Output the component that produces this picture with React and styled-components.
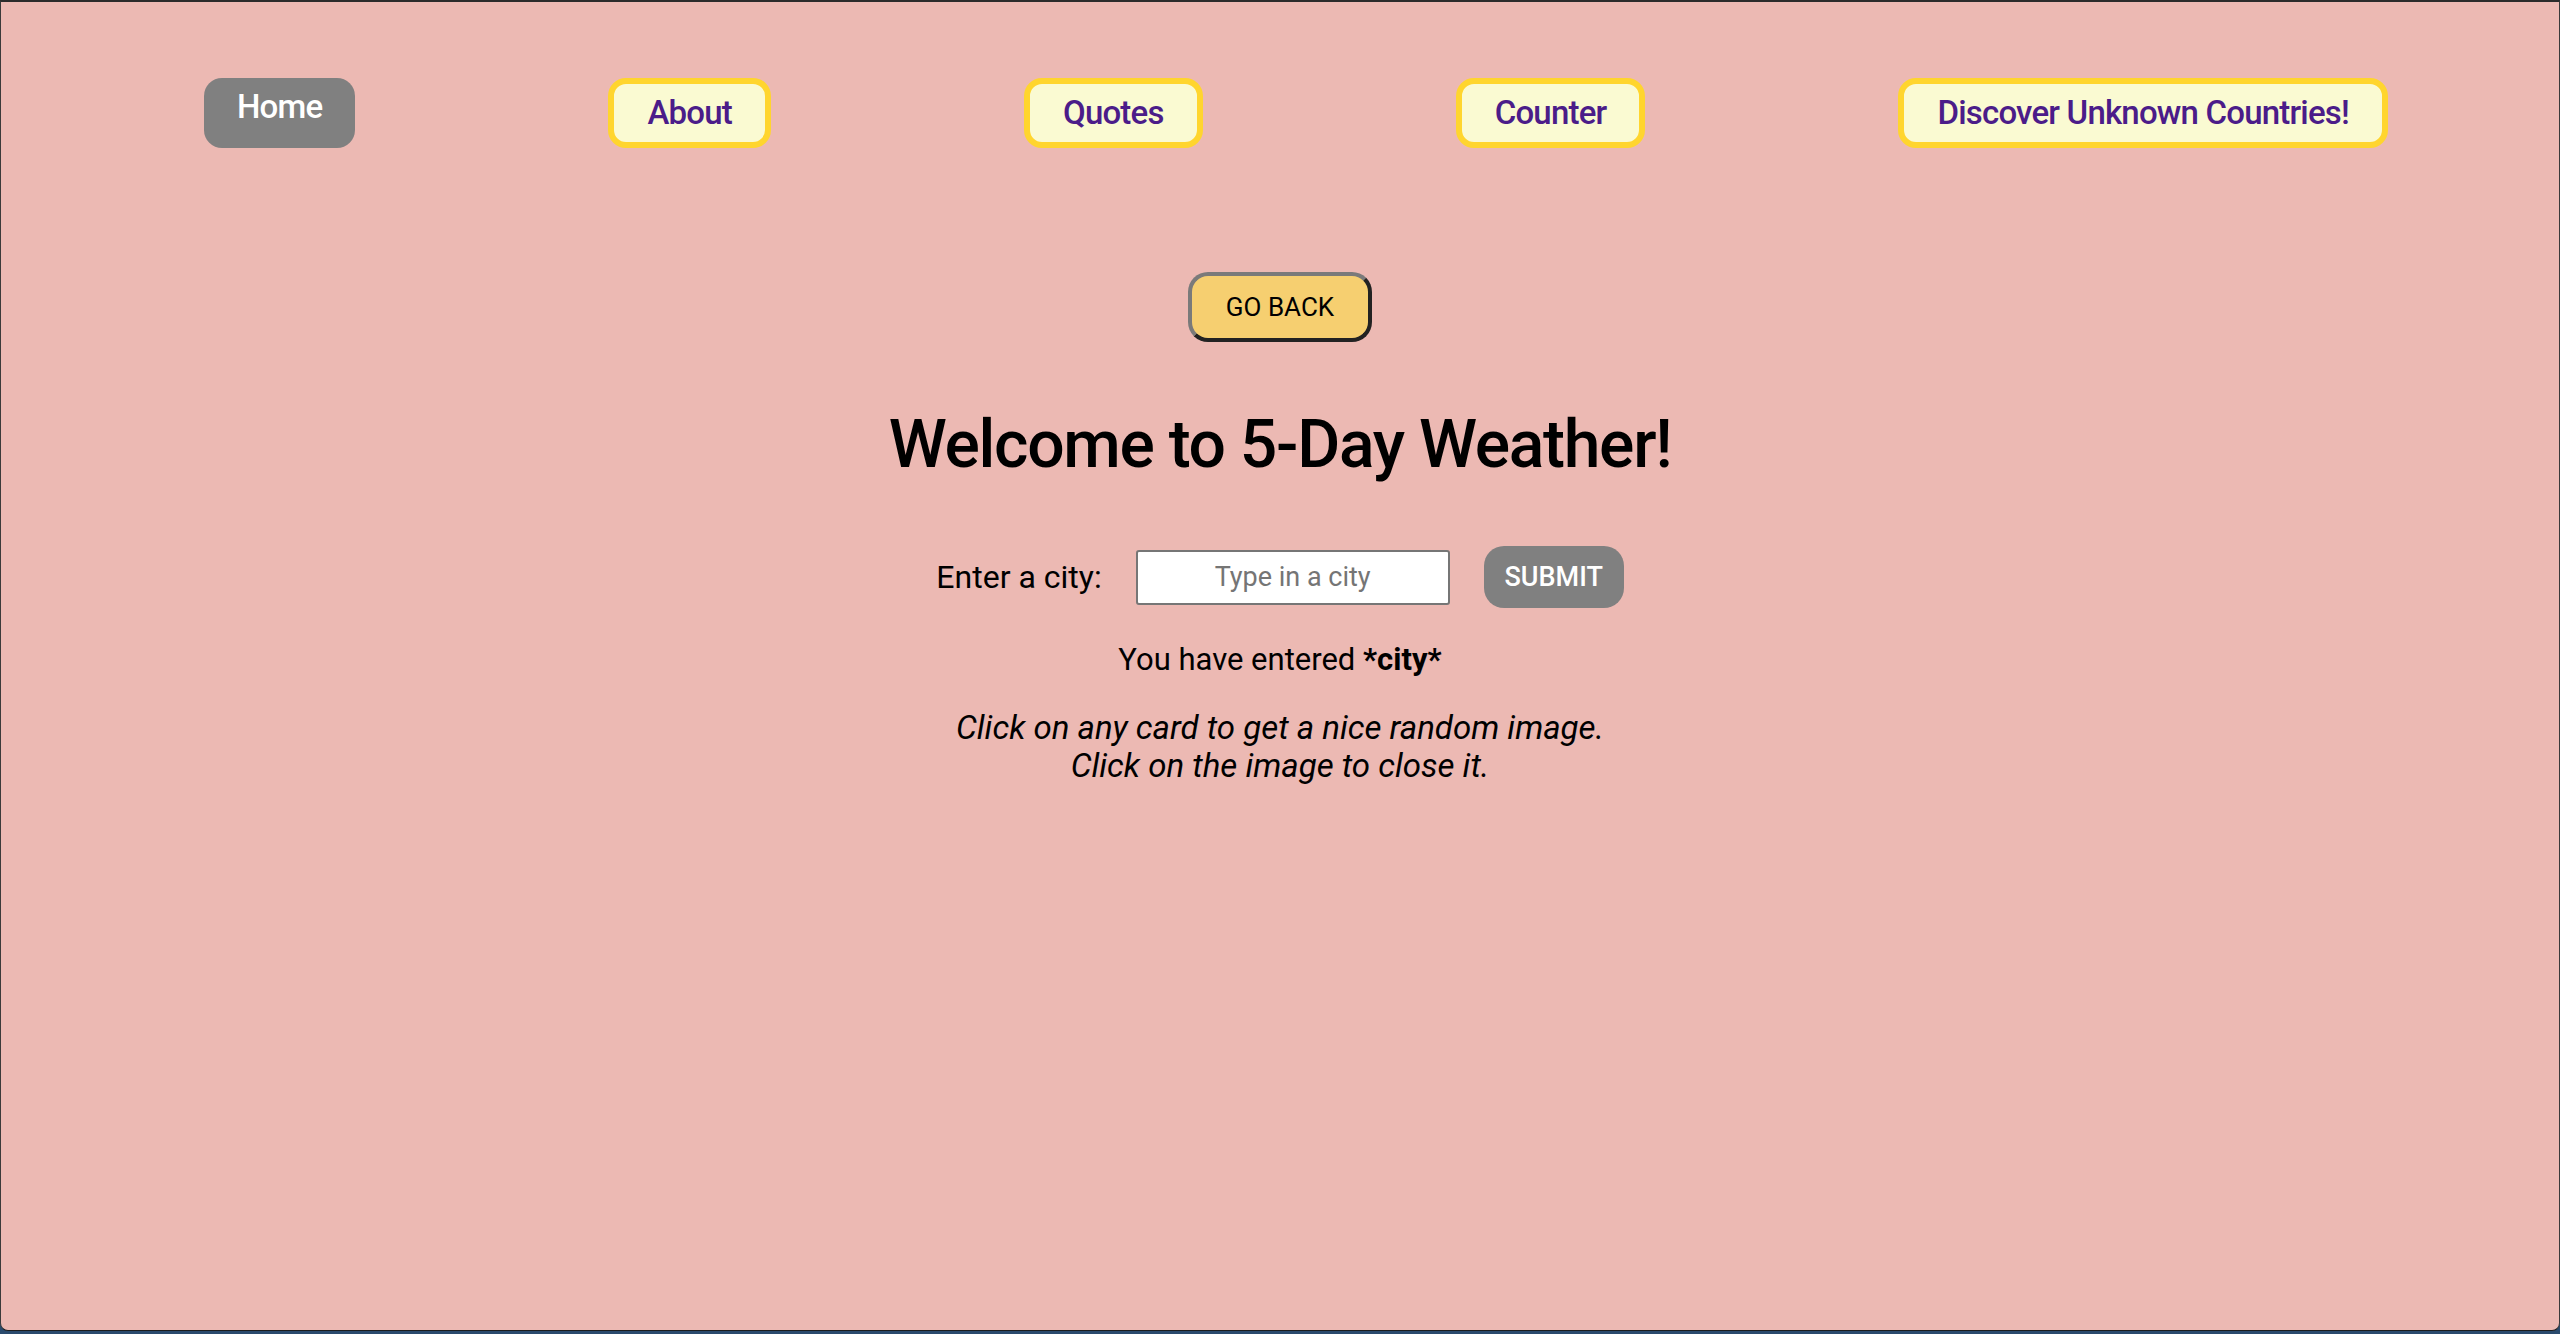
import React from "react";
import styled, { createGlobalStyle } from "styled-components";

const GlobalStyle = createGlobalStyle`
  html, body {
    margin: 0;
    padding: 0;
    background: #2a4a6d;
  }
  body {
    font-family: Roboto, "Liberation Sans", Arial, sans-serif;
  }
`;

const Frame = styled.div`
  box-sizing: border-box;
  height: 1331px;
  border-top: 2px solid #2b2b2b;
  border-bottom: 1px solid #1c1c1c;
  border-left: 1px solid #3a3a3a;
  border-right: 1px solid #3a3a3a;
  border-radius: 0 0 8px 8px;
  background: #ecb9b3;
  overflow: hidden;
`;

const Nav = styled.nav`
  display: flex;
  justify-content: space-between;
  align-items: flex-start;
  padding: 76px 171px 0 203px;
`;

const NavLink = styled.a`
  box-sizing: border-box;
  height: 70px;
  font-size: 33px;
  font-weight: 500;
  letter-spacing: -0.8px;
  line-height: 38px;
  text-decoration: none;
  border-radius: 18px;
  cursor: pointer;
  color: ${(p) => (p.$active ? "#ffffff" : "#4b1c89")};
  background: ${(p) => (p.$active ? "#808080" : "#fafad2")};
  border: ${(p) => (p.$active ? "none" : "6px solid #ffd52e")};
  padding: ${(p) => (p.$active ? "10px 33px 22px" : "10px 33px")};
`;

const Main = styled.main`
  display: flex;
  flex-direction: column;
  align-items: center;
`;

const BackButton = styled.button`
  box-sizing: border-box;
  margin-top: 124px;
  width: 184px;
  height: 70px;
  font-family: Roboto, "Liberation Sans", Arial, sans-serif;
  font-size: 26px;
  color: #000;
  background: #f6cf70;
  border: 4px solid;
  border-color: #7a7a7a #222 #222 #7a7a7a;
  border-radius: 20px;
  cursor: pointer;
`;

const Title = styled.h1`
  margin: 64px 0 0;
  font-size: 66px;
  font-weight: 500;
  letter-spacing: -1.3px;
  line-height: normal;
  color: #000;
`;

const CityForm = styled.form`
  display: flex;
  align-items: center;
  gap: 34px;
  margin-top: 63px;
`;

const Label = styled.label`
  font-size: 32px;
  color: #000;
`;

const CityInput = styled.input`
  box-sizing: border-box;
  width: 314px;
  height: 55px;
  font-family: Roboto, "Liberation Sans", Arial, sans-serif;
  font-size: 27px;
  text-align: center;
  border: 2px solid #767676;
  border-radius: 3px;
  background: #fff;
  &::placeholder {
    color: #757575;
  }
`;

const SubmitButton = styled.button`
  box-sizing: border-box;
  width: 140px;
  height: 62px;
  font-family: Roboto, "Liberation Sans", Arial, sans-serif;
  font-size: 27px;
  font-weight: 500;
  color: #fff;
  background: #808080;
  border: none;
  border-radius: 20px;
  cursor: pointer;
`;

const Entered = styled.p`
  margin: 33px 0 0;
  font-size: 31px;
  color: #000;
`;

const Hint = styled.p`
  margin: 31px 0 0;
  font-size: 33px;
  line-height: 38px;
  font-style: italic;
  text-align: center;
  color: #000;
`;

const links = ["Home", "About", "Quotes", "Counter", "Discover Unknown Countries!"];

export default function App() {
  return (
    <>
      <GlobalStyle />
      <Frame>
        <Nav>
          {links.map((l) => (
            <NavLink key={l} $active={l === "Home"}>
              {l}
            </NavLink>
          ))}
        </Nav>
        <Main>
          <BackButton>GO BACK</BackButton>
          <Title>Welcome to 5-Day Weather!</Title>
          <CityForm onSubmit={(e) => e.preventDefault()}>
            <Label htmlFor="city">Enter a city:</Label>
            <CityInput id="city" placeholder="Type in a city" />
            <SubmitButton type="submit">SUBMIT</SubmitButton>
          </CityForm>
          <Entered>
            You have entered <b>*city*</b>
          </Entered>
          <Hint>
            Click on any card to get a nice random image.
            <br />
            Click on the image to close it.
          </Hint>
        </Main>
      </Frame>
    </>
  );
}
